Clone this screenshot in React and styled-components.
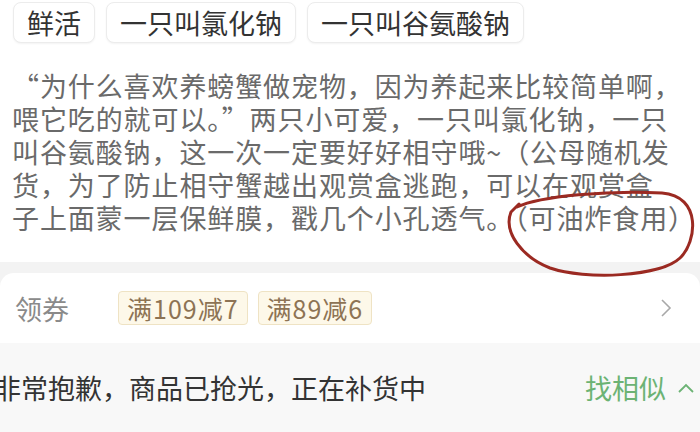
import styled, { createGlobalStyle } from "styled-components";

const GlobalStyle = createGlobalStyle`
  html, body {
    margin: 0;
    padding: 0;
    background: #f3f3f3;
    overflow: hidden;
  }
  body {
    font-family: "Noto Sans CJK SC", "Noto Sans", sans-serif;
  }
`;

const lines = [
  "“为什么喜欢养螃蟹做宠物，因为养起来比较简单啊，",
  "喂它吃的就可以。”两只小可爱，一只叫氯化钠，一只",
  "叫谷氨酸钠，这一次一定要好好相守哦~（公母随机发",
  "货，为了防止相守蟹越出观赏盒逃跑，可以在观赏盒",
  "子上面蒙一层保鲜膜，戳几个小孔透气。（可油炸食用）",
];

const App = () => {
  return (
    <Page>
      <GlobalStyle />
      <InfoCard>
        <Tags>
          <Tag>鲜活</Tag>
          <Tag>一只叫氯化钠</Tag>
          <Tag>一只叫谷氨酸钠</Tag>
        </Tags>
        <Desc>
          {lines.map((l) => (
            <Line key={l}>{l}</Line>
          ))}
        </Desc>
        <Scribble viewBox="0 0 700 300" width="700" height="300">
          <path
            d="M 517 207 C 540 196, 610 190, 662 193 C 702 196, 697 242, 680 258 C 660 277, 585 280, 550 268 C 522 257, 503 232, 511 212 L 519 204"
            fill="none"
            stroke="#9b2a22"
            strokeWidth="3"
            strokeLinecap="round"
          />
        </Scribble>
      </InfoCard>
      <CouponCard>
        <CouponLabel>领券</CouponLabel>
        <Coupons>
          <Coupon>满109减7</Coupon>
          <Coupon>满89减6</Coupon>
        </Coupons>
        <Chevron viewBox="0 0 12 20" width="12" height="20">
          <polyline points="2,2 10,10 2,18" fill="none" stroke="#a8a8a8" strokeWidth="1.6" />
        </Chevron>
      </CouponCard>
      <SoldOutBar>
        <SoldOutText>非常抱歉，商品已抢光，正在补货中</SoldOutText>
        <FindSimilar>
          找相似
          <svg viewBox="0 0 16 10" width="16" height="10">
            <polyline points="1,9 8,2 15,9" fill="none" stroke="#6cb374" strokeWidth="1.8" />
          </svg>
        </FindSimilar>
      </SoldOutBar>
    </Page>
  );
};

const Page = styled.div`
  width: 700px;
  height: 432px;
  display: flex;
  flex-direction: column;
  background: #f3f3f3;
`;

const InfoCard = styled.div`
  position: relative;
  background: #ffffff;
  height: 262px;
  padding: 2px 0 0 12px;
  box-sizing: border-box;
`;

const Tags = styled.div`
  display: flex;
  gap: 11px;
  padding-left: 1px;
`;

const Tag = styled.div`
  height: 41px;
  box-sizing: border-box;
  padding: 0 13px;
  border: 1px solid #ececec;
  border-radius: 8px;
  background: #fff;
  box-shadow: 0 1px 2px rgba(0, 0, 0, 0.05);
  font-size: 27px;
  line-height: 39px;
  color: #333;
`;

const Desc = styled.div`
  margin-top: 26px;
  font-size: 27px;
  line-height: 33px;
  letter-spacing: 0.9px;
  color: #6a6a6a;
`;

const Line = styled.div`
  white-space: nowrap;
`;

const Scribble = styled.svg`
  position: absolute;
  left: 0;
  top: 0;
  overflow: visible;
  pointer-events: none;
  z-index: 2;
`;

const CouponCard = styled.div`
  margin-top: 11px;
  height: 70px;
  background: #fff;
  border-radius: 14px 14px 0 0;
  display: flex;
  align-items: center;
  padding: 0 28px 0 15px;
`;

const CouponLabel = styled.div`
  width: 103px;
  font-size: 27px;
  color: #8a8a8a;
`;

const Coupons = styled.div`
  display: flex;
  gap: 10px;
  flex: 1;
`;

const Coupon = styled.div`
  height: 34px;
  box-sizing: border-box;
  padding: 0 8px;
  border: 1px solid #efe3c4;
  border-radius: 4px;
  background: #fdf8e9;
  color: #8d7354;
  font-size: 25px;
  line-height: 32px;
  letter-spacing: 1px;
`;

const Chevron = styled.svg`
  display: block;
`;

const SoldOutBar = styled.div`
  flex: 1;
  background: #f8f8f8;
  display: flex;
  align-items: center;
  justify-content: space-between;
  padding: 0 6px 0 0;
`;

const SoldOutText = styled.div`
  margin-left: -6px;
  font-size: 27px;
  color: #333;
`;

const FindSimilar = styled.div`
  display: flex;
  align-items: center;
  gap: 12px;
  font-size: 27px;
  color: #6cb374;
`;

export default App;
